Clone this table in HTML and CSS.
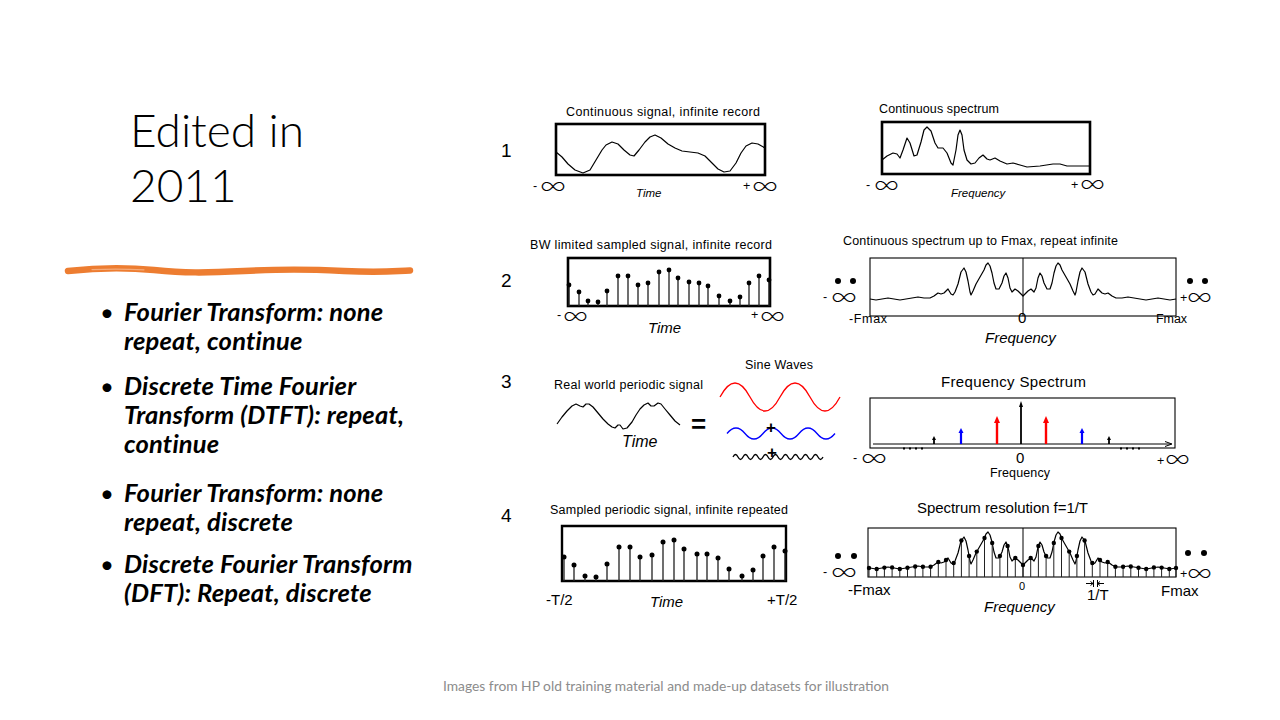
FILE: index.html
```html
<!DOCTYPE html>
<html lang="en">
<head>
<meta charset="utf-8">
<title>Edited in 2011</title>
<link rel="stylesheet" href="styles.css">
</head>
<body>
<div class="slide">
  <div class="left">
    <h1 class="title">Edited in<br>2011</h1>
    <svg class="brush" width="350" height="16" viewBox="0 0 350 16">
      <path class="brush-main" d="M4,8 C30,5 60,4 90,7 S140,10 180,8 S240,6 280,8 S330,8 346,7.5"/>
      <path class="brush-hi" d="M28,6.6 C45,6 62,6 80,6.8"/>
    </svg>
    <ul class="bullets">
      <li>Fourier Transform: none<br>repeat, continue</li>
      <li>Discrete Time Fourier<br>Transform (DTFT): repeat,<br>continue</li>
      <li>Fourier Transform: none<br>repeat, discrete</li>
      <li>Discrete Fourier Transform<br>(DFT): Repeat, discrete</li>
    </ul>
  </div>
  <div class="right">
    <svg class="diagram" width="730" height="530" viewBox="495 95 730 530">
      <defs>
        <path id="spec2" d="M870,299 L876,300 882,299 888,298 894,299 900,300 906,299 912,298 918,297 924,298 930,298 934,296 938,293 941,294 944,293 948,289 951,294 953,295 955,292 958,284 961,272 964,268 966,272 968,281 970,292 971,295 973,291 976,284 980,277 984,270 986,265 988,263 990,266 992,273 994,283 996,289 999,289 1002,283 1004,276 1006,273 1008,278 1010,288 1012,292 1015,289 1018,291 1021,294 1023,296 1025,294 1028,291 1031,289 1034,292 1036,288 1038,278 1040,273 1042,276 1044,283 1047,289 1050,289 1052,283 1054,273 1056,266 1058,263 1060,265 1062,270 1066,277 1070,284 1073,291 1075,295 1076,292 1078,281 1080,272 1082,268 1085,272 1088,284 1091,292 1093,295 1095,294 1098,289 1102,293 1105,294 1108,293 1112,296 1116,298 1122,298 1128,297 1134,298 1140,299 1146,300 1152,299 1158,298 1164,299 1170,300 1176,299"/>
      </defs>

      <!-- Row 1 -->
      <text class="num" x="501" y="157">1</text>
      <text class="lb" x="566" y="116" textLength="194">Continuous signal, infinite record</text>
      <rect class="box-thick" x="556" y="124" width="209" height="51"/>
      <polyline class="wave" points="556,152 562,157 568,164 575,170 583,173 590,170 596,160 602,150 606,145 612,142 618,144 624,150 630,155 634,156 639,150 645,142 650,137 655,135 661,138 668,144 675,148 682,151 690,152 698,153 705,156 712,163 718,169 724,172 730,171 736,163 741,153 746,146 752,143 758,144 765,148"/>
      <text class="lb" x="533" y="190">-</text><text class="inf" x="540" y="194" textLength="26" lengthAdjust="spacingAndGlyphs">∞</text>
      <text class="lb it sm" x="636" y="197">Time</text>
      <text class="lb" x="743" y="190">+</text><text class="inf" x="752" y="194" textLength="26" lengthAdjust="spacingAndGlyphs">∞</text>

      <text class="lb" x="879" y="113" textLength="120">Continuous spectrum</text>
      <rect class="box-thick" x="882" y="122" width="208" height="52"/>
      <polyline class="wave" points="882,160 887,156 893,153 897,154 900,158 903,150 907,138 910,143 914,156 917,155 921,142 924,130 927,127 931,131 935,143 938,148 943,148 947,153 951,163 953,165 956,150 958,135 960,130 962,135 964,150 967,160 971,164 975,163 979,158 983,155 987,159 990,160 995,158 1000,161 1007,164 1013,163 1020,165 1027,167 1040,166 1053,164 1060,164 1067,166 1080,166 1090,166"/>
      <text class="lb" x="866" y="189">-</text><text class="inf" x="874" y="192.5" textLength="25" lengthAdjust="spacingAndGlyphs">∞</text>
      <text class="lb it sm" x="951" y="197">Frequency</text>
      <text class="lb" x="1071" y="189">+</text><text class="inf" x="1080" y="191.5" textLength="25" lengthAdjust="spacingAndGlyphs">∞</text>

      <!-- Row 2 -->
      <text class="num" x="501" y="287">2</text>
      <text class="lb" x="530" y="249" textLength="242">BW limited sampled signal, infinite record</text>
      <rect class="box-thick" x="568" y="258" width="202" height="48"/>
      <path class="stem" d="M569,306V285 M579,306V292 M588,306V301 M598,306V302 M607,306V291 M618,306V276 M628,306V276 M638,306V285 M648,306V283 M659,306V272 M669,306V270 M678,306V278 M689,306V282 M699,306V283 M708,306V286 M719,306V296 M730,306V301 M740,306V297 M749,306V283 M759,306V276 M769,306V280"/>
      <g class="dots">
        <circle cx="569" cy="285" r="2.4"/><circle cx="579" cy="292" r="2.4"/><circle cx="588" cy="301" r="2.4"/><circle cx="598" cy="302" r="2.4"/><circle cx="607" cy="291" r="2.4"/><circle cx="618" cy="276" r="2.4"/><circle cx="628" cy="276" r="2.4"/><circle cx="638" cy="285" r="2.4"/><circle cx="648" cy="283" r="2.4"/><circle cx="659" cy="272" r="2.4"/><circle cx="669" cy="270" r="2.4"/><circle cx="678" cy="278" r="2.4"/><circle cx="689" cy="282" r="2.4"/><circle cx="699" cy="283" r="2.4"/><circle cx="708" cy="286" r="2.4"/><circle cx="719" cy="296" r="2.4"/><circle cx="730" cy="301" r="2.4"/><circle cx="740" cy="297" r="2.4"/><circle cx="749" cy="283" r="2.4"/><circle cx="759" cy="276" r="2.4"/><circle cx="769" cy="280" r="2.4"/>
      </g>
      <text class="lb" x="557" y="319">-</text><text class="inf" x="563" y="324" textLength="25" lengthAdjust="spacingAndGlyphs">∞</text>
      <text class="lb it md" x="648" y="333">Time</text>
      <text class="lb" x="751" y="319">+</text><text class="inf" x="760" y="324" textLength="25" lengthAdjust="spacingAndGlyphs">∞</text>

      <text class="lb" x="843" y="245" textLength="275">Continuous spectrum up to Fmax, repeat infinite</text>
      <rect class="box-thin" x="870" y="258" width="306" height="58"/>
      <line class="thin" x1="1023" y1="258" x2="1023" y2="316"/>
      <use href="#spec2" class="wave"/>
      <g class="dots"><circle cx="838" cy="281" r="3"/><circle cx="853" cy="281" r="3"/><circle cx="1190" cy="281" r="3"/><circle cx="1205" cy="281" r="3"/></g>
      <text class="lb" x="823" y="301">-</text><text class="inf" x="831" y="304.5" textLength="26" lengthAdjust="spacingAndGlyphs">∞</text>
      <text class="lb" x="1180" y="302">+</text><text class="inf" x="1187" y="305" textLength="25" lengthAdjust="spacingAndGlyphs">∞</text>
      <text class="lb" x="849" y="323" textLength="38">-Fmax</text>
      <text class="lb md" x="1018" y="323">0</text>
      <text class="lb" x="1156" y="323" textLength="31">Fmax</text>
      <text class="lb it md" x="985" y="343">Frequency</text>

      <!-- Row 3 -->
      <text class="num" x="501" y="388">3</text>
      <text class="lb" x="554" y="389" textLength="149">Real world periodic signal</text>
      <polyline class="wave" points="557,424 562,417 567,411 572,406 576,404 580,406 583,407 586,404 589,404 593,407 598,413 603,419 608,424 612,427 615,428 618,425 620,425 623,429 627,428 632,422 636,415 640,409 644,405 648,403 651,406 654,406 658,403 661,404 665,409 670,415 675,421 680,425"/>
      <text class="lb it lg" x="622" y="447">Time</text>
      <text class="eq" x="691" y="433">=</text>
      <text class="lb" x="745" y="369" textLength="68">Sine Waves</text>
      <path class="sine red" d="M720,397 Q735,369 750,397 T780,397 T810,397 T840,397"/>
      <path class="sine blue" d="M727,433.5 Q736,422.5 745,433.5 T763,433.5 T781,433.5 T799,433.5 T817,433.5 T835,433.5"/>
      <path class="sine" d="M733,457 Q735.5,452 738,457 T743,457 T748,457 T753,457 T758,457 T763,457 T768,457 T773,457 T778,457 T783,457 T788,457 T793,457 T798,457 T803,457 T808,457 T813,457 T818,457 T823,457"/>
      <text class="plus" x="766" y="433">+</text>
      <text class="plus" x="767" y="458">+</text>

      <text class="lb md" x="941" y="387" textLength="145">Frequency Spectrum</text>
      <rect class="box-thin" x="870" y="398" width="305" height="50"/>
      <line class="thin" x1="873" y1="444" x2="1171" y2="444"/>
      <path class="thin" d="M1165,441.5 L1172,444 L1165,446.5"/>
      <path class="arrow" d="M1021,444V405"/><path class="head" d="M1019,407 L1021,401 L1023,407Z"/>
      <path class="arrow red-s" d="M997,444V422"/><path class="head red-f" d="M994,423 L997,416 L1000,423Z"/>
      <path class="arrow red-s" d="M1046,444V422"/><path class="head red-f" d="M1043,423 L1046,416 L1049,423Z"/>
      <path class="arrow blue-s" d="M961,444V432"/><path class="head blue-f" d="M958.5,433 L961,428 L963.5,433Z"/>
      <path class="arrow blue-s" d="M1082,444V432"/><path class="head blue-f" d="M1079.5,433 L1082,428 L1084.5,433Z"/>
      <path class="arrow" d="M934,444V439"/><path class="head" d="M932,440 L934,436 L936,440Z"/>
      <path class="arrow" d="M1109,444V439"/><path class="head" d="M1107,440 L1109,436 L1111,440Z"/>
      <g class="dots">
        <rect x="903" y="447.5" width="2" height="2"/><rect x="909" y="447.5" width="2" height="2"/><rect x="915" y="447.5" width="2" height="2"/><rect x="921" y="447.5" width="2" height="2"/>
        <rect x="1120" y="447.5" width="2" height="2"/><rect x="1126" y="447.5" width="2" height="2"/><rect x="1132" y="447.5" width="2" height="2"/><rect x="1138" y="447.5" width="2" height="2"/>
      </g>
      <text class="lb" x="853" y="462">-</text><text class="inf" x="861" y="465.5" textLength="26" lengthAdjust="spacingAndGlyphs">∞</text>
      <text class="lb md" x="1016" y="463">0</text>
      <text class="lb" x="1157" y="465">+</text><text class="inf" x="1165" y="466.5" textLength="25" lengthAdjust="spacingAndGlyphs">∞</text>
      <text class="lb" x="990" y="477" textLength="60">Frequency</text>

      <!-- Row 4 -->
      <text class="num" x="501" y="522">4</text>
      <text class="lb" x="550" y="514" textLength="238">Sampled periodic signal, infinite repeated</text>
      <path class="box-open" d="M562,581 V526 H786 V581 Z"/>
      <path class="stem" d="M564,581V557 M574,581V565 M585,581V576 M596,581V577 M607,581V564 M619,581V547 M630,581V547 M640,581V557 M652,581V555 M663,581V542 M674,581V540 M684,581V549 M697,581V554 M707,581V554 M718,581V558 M729,581V569 M742,581V576 M753,581V570 M763,581V556 M774,581V547 M785,581V551"/>
      <g class="dots">
        <circle cx="564" cy="557" r="2.5"/><circle cx="574" cy="565" r="2.5"/><circle cx="585" cy="576" r="2.5"/><circle cx="596" cy="577" r="2.5"/><circle cx="607" cy="564" r="2.5"/><circle cx="619" cy="547" r="2.5"/><circle cx="630" cy="547" r="2.5"/><circle cx="640" cy="557" r="2.5"/><circle cx="652" cy="555" r="2.5"/><circle cx="663" cy="542" r="2.5"/><circle cx="674" cy="540" r="2.5"/><circle cx="684" cy="549" r="2.5"/><circle cx="697" cy="554" r="2.5"/><circle cx="707" cy="554" r="2.5"/><circle cx="718" cy="558" r="2.5"/><circle cx="729" cy="569" r="2.5"/><circle cx="742" cy="576" r="2.5"/><circle cx="753" cy="570" r="2.5"/><circle cx="763" cy="556" r="2.5"/><circle cx="774" cy="547" r="2.5"/><circle cx="785" cy="551" r="2.5"/>
      </g>
      <text class="lb md" x="546" y="605">-T/2</text>
      <text class="lb it md" x="650" y="607">Time</text>
      <text class="lb md" x="767" y="605">+T/2</text>

      <text class="lb md" x="917" y="513" textLength="171">Spectrum resolution f=1/T</text>
      <rect class="box-thin" x="868" y="528" width="308" height="49"/>
      <line class="thin" x1="1023" y1="528" x2="1023" y2="577"/>
      <use href="#spec2" class="wave" transform="translate(0,269)"/>
      <path class="stem thin-stem" d="M869,577V568 M876.7,577V569 M884.4,577V567.6 M892.1,577V567.4 M899.8,577V569 M907.5,577V567.8 M915.2,577V566.5 M922.9,577V566.8 M930.6,577V566.7 M938.3,577V562 M946,577V560 M953.7,577V563 M961.4,577V540.5 M969.1,577V556 M976.8,577V551.6 M984.5,577V538 M992.2,577V543 M999.9,577V556 M1007.6,577V546 M1015.3,577V558 M1023,577V565 M1030.7,577V558 M1038.4,577V546 M1046.1,577V556 M1053.8,577V543 M1061.5,577V538 M1069.2,577V551.6 M1076.9,577V556 M1084.6,577V540.5 M1092.3,577V563 M1100,577V560 M1107.7,577V562 M1115.4,577V566.7 M1123.1,577V566.8 M1130.8,577V566.5 M1138.5,577V567.8 M1146.2,577V569 M1153.9,577V567.4 M1161.6,577V567.6 M1169.3,577V569 M1176,577V568"/>
      <g class="dots">
        <circle cx="869" cy="568" r="2.2"/><circle cx="876.7" cy="569" r="2.2"/><circle cx="884.4" cy="567.6" r="2.2"/><circle cx="892.1" cy="567.4" r="2.2"/><circle cx="899.8" cy="569" r="2.2"/><circle cx="907.5" cy="567.8" r="2.2"/><circle cx="915.2" cy="566.5" r="2.2"/><circle cx="922.9" cy="566.8" r="2.2"/><circle cx="930.6" cy="566.7" r="2.2"/><circle cx="938.3" cy="562" r="2.2"/><circle cx="946" cy="560" r="2.2"/><circle cx="953.7" cy="563" r="2.2"/><circle cx="961.4" cy="540.5" r="2.2"/><circle cx="969.1" cy="556" r="2.2"/><circle cx="976.8" cy="551.6" r="2.2"/><circle cx="984.5" cy="538" r="2.2"/><circle cx="992.2" cy="543" r="2.2"/><circle cx="999.9" cy="556" r="2.2"/><circle cx="1007.6" cy="546" r="2.2"/><circle cx="1015.3" cy="558" r="2.2"/><circle cx="1023" cy="565" r="2.2"/>
        <circle cx="1030.7" cy="558" r="2.2"/><circle cx="1038.4" cy="546" r="2.2"/><circle cx="1046.1" cy="556" r="2.2"/><circle cx="1053.8" cy="543" r="2.2"/><circle cx="1061.5" cy="538" r="2.2"/><circle cx="1069.2" cy="551.6" r="2.2"/><circle cx="1076.9" cy="556" r="2.2"/><circle cx="1084.6" cy="540.5" r="2.2"/><circle cx="1092.3" cy="563" r="2.2"/><circle cx="1100" cy="560" r="2.2"/><circle cx="1107.7" cy="562" r="2.2"/><circle cx="1115.4" cy="566.7" r="2.2"/><circle cx="1123.1" cy="566.8" r="2.2"/><circle cx="1130.8" cy="566.5" r="2.2"/><circle cx="1138.5" cy="567.8" r="2.2"/><circle cx="1146.2" cy="569" r="2.2"/><circle cx="1153.9" cy="567.4" r="2.2"/><circle cx="1161.6" cy="567.6" r="2.2"/><circle cx="1169.3" cy="569" r="2.2"/><circle cx="1176" cy="568" r="2.2"/>
        <circle cx="838" cy="556" r="3"/><circle cx="854" cy="556" r="3"/><circle cx="1188" cy="553" r="3"/><circle cx="1204" cy="553" r="3"/>
      </g>
      <text class="lb" x="823" y="576">-</text><text class="inf" x="831" y="579.5" textLength="26" lengthAdjust="spacingAndGlyphs">∞</text>
      <text class="lb" x="1180" y="578">+</text><text class="inf" x="1187" y="580.5" textLength="25" lengthAdjust="spacingAndGlyphs">∞</text>
      <text class="lb md" x="848" y="595">-Fmax</text>
      <text class="lb xs" x="1019" y="590">0</text>
      <text class="lb md" x="1161" y="596">Fmax</text>
      <path class="thin" d="M1086,583.5H1093 M1090.5,581.5 L1093,583.5 L1090.5,585.5 M1093.5,580V587 M1097.5,580V587 M1104,583.5H1097.5 M1100,581.5 L1097.5,583.5 L1100,585.5"/>
      <text class="lb md" x="1087" y="600">1/T</text>
      <text class="lb it md" x="984" y="612">Frequency</text>
    </svg>
  </div>
  <p class="footer">Images from HP old training material and made-up datasets for illustration</p>
</div>
</body>
</html>
```

FILE: styles.css
```css
* { box-sizing: border-box; }

html, body {
  margin: 0;
  padding: 0;
  background: #ffffff;
}

.slide {
  width: 1280px;
  height: 720px;
  display: grid;
  grid-template-columns: 495px 785px;
  grid-template-rows: 1fr auto;
  font-family: Lato, "Open Sans", "Liberation Sans", sans-serif;
  color: #000;
  overflow: hidden;
}

.left {
  padding-top: 102px;
}

.title {
  margin: 0 0 0 130px;
  font-family: Lato, "Open Sans", sans-serif;
  font-weight: 300;
  font-size: 46px;
  line-height: 55px;
  color: #000;
}

.brush {
  display: block;
  margin: 51px 0 0 64px;
}

.brush-main {
  fill: none;
  stroke: #ed7d31;
  stroke-width: 6.5;
  stroke-linecap: round;
}

.brush-hi {
  fill: none;
  stroke: #f7b68c;
  stroke-width: 1.2;
  stroke-linecap: round;
  opacity: 0.8;
}

.bullets {
  list-style: none;
  margin: 18px 0 0 0;
  padding: 0 0 0 100px;
}

.bullets li {
  font-family: Lato, "Open Sans", sans-serif;
  font-weight: 700;
  font-style: italic;
  font-size: 25.5px;
  letter-spacing: 0.2px;
  line-height: 29px;
  padding-left: 24px;
  text-indent: -24px;
  margin-bottom: 16px;
  white-space: nowrap;
}

.bullets li:nth-child(2) { margin-bottom: 20px; }
.bullets li:nth-child(3) { margin-bottom: 13px; }

.bullets li::before {
  content: "•";
  display: inline-block;
  width: 24px;
  text-indent: 0;
  font-style: normal;
  font-weight: 400;
  font-size: 24px;
  vertical-align: top;
}

.right {
  padding-top: 95px;
}

.diagram {
  display: block;
}

.footer {
  grid-column: 1 / 3;
  margin: 0;
  padding: 0 0 26px 443px;
  font-family: Lato, "Open Sans", sans-serif;
  font-size: 13.8px;
  line-height: 16px;
  color: #8c8c8c;
}

/* diagram styles */
.lb {
  font-family: "Liberation Sans", Arial, sans-serif;
  font-size: 12.5px;
  fill: #000;
}

.it { font-style: italic; }
.sm { font-size: 11.5px; }
.md { font-size: 15px; }
.lg { font-size: 16px; }
.xs { font-size: 11px; }

.num {
  font-family: "Liberation Sans", Arial, sans-serif;
  font-size: 19px;
  fill: #000;
}

.inf {
  font-family: Inter, Roboto, "DejaVu Sans", sans-serif;
  font-weight: 200;
  font-size: 24px;
  fill: #000;
}

.eq {
  font-family: "Liberation Sans", Arial, sans-serif;
  font-size: 26px;
  font-weight: 700;
  fill: #000;
}

.plus {
  font-family: "Liberation Sans", Arial, sans-serif;
  font-size: 17px;
  font-weight: 700;
  fill: #000;
}

.box-thick {
  fill: none;
  stroke: #000;
  stroke-width: 2.6;
}

.box-open {
  fill: none;
  stroke: #000;
  stroke-width: 2.4;
}

.box-thin {
  fill: none;
  stroke: #000;
  stroke-width: 1.1;
}

.thin {
  fill: none;
  stroke: #000;
  stroke-width: 1;
}

.wave {
  fill: none;
  stroke: #000;
  stroke-width: 1.2;
  stroke-linejoin: round;
}

.sine {
  fill: none;
  stroke: #000;
  stroke-width: 1.3;
}

.sine.red { stroke: #ff0000; }
.sine.blue { stroke: #0000ff; }

.stem {
  fill: none;
  stroke: #222;
  stroke-width: 1.3;
}

.thin-stem { stroke-width: 1; }

.dots { fill: #000; }

.arrow {
  fill: none;
  stroke: #000;
  stroke-width: 1.8;
}

.arrow.red-s { stroke: #ff0000; stroke-width: 2.4; }
.arrow.blue-s { stroke: #0000ff; stroke-width: 2.2; }

.head { fill: #000; }
.head.red-f { fill: #ff0000; }
.head.blue-f { fill: #0000ff; }
```
